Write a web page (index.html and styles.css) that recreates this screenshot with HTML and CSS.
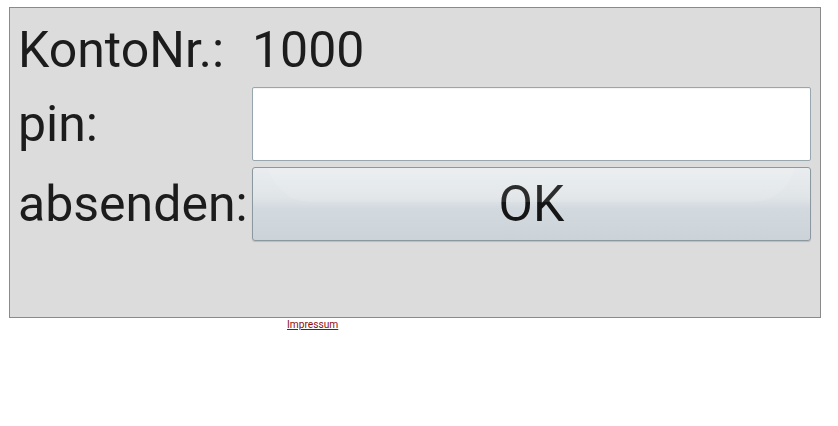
FILE: index.html
```html
<!DOCTYPE html>
<html lang="de">
<head>
<meta charset="utf-8">
<title>Login</title>
<link rel="stylesheet" href="styles.css">
</head>
<body>
<div class="panel">
  <form class="form">
    <div class="label">KontoNr.:</div>
    <div class="value">1000</div>
    <div class="label">pin:</div>
    <div class="field"><input class="pin" type="password"></div>
    <div class="label">absenden:</div>
    <div class="field"><button class="ok" type="button">OK</button></div>
  </form>
</div>
<div class="footer"><a class="impressum" href="#">Impressum</a></div>
</body>
</html>
```

FILE: styles.css
```css
html, body {
  margin: 0;
  padding: 0;
  background: #ffffff;
}
body {
  font-family: Roboto, "Liberation Sans", sans-serif;
  color: #1c1c1c;
}
.panel {
  margin: 7px 0 0 9px;
  width: 810px;
  height: 309px;
  border: 1px solid #8a8a8a;
  background: #dcdcdc;
  box-sizing: content-box;
}
.form {
  display: grid;
  grid-template-columns: 234px 559px;
  grid-template-rows: 61px 74px 74px;
  row-gap: 6px;
  column-gap: 0;
  padding: 12px 0 0 8px;
  margin: 0;
}
.label, .value {
  font-size: 50px;
  line-height: 61px;
  align-self: center;
  white-space: nowrap;
}
.field {
  display: flex;
}
.pin {
  flex: 1;
  margin: 0;
  height: 74px;
  box-sizing: border-box;
  border: 1px solid #98a7ae;
  border-radius: 2px;
  background: #ffffff;
  box-shadow: inset 0 1px 1px rgba(0,0,0,0.05);
  outline: none;
}
.ok {
  position: relative;
  overflow: hidden;
  flex: 1;
  margin: 0;
  height: 74px;
  box-sizing: border-box;
  border: 1px solid #8c989f;
  border-radius: 3px;
  background: linear-gradient(#e9edef 0%, #e0e5e8 40%, #d3dadf 56%, #cbd3d9 100%);
  box-shadow: 0 1px 1px rgba(0,0,0,0.15);
  font-family: Roboto, "Liberation Sans", sans-serif;
  font-size: 50px;
  color: #151515;
  padding: 0;
}
.ok::before {
  content: "";
  position: absolute;
  left: 14px;
  right: 14px;
  top: -30px;
  height: 64px;
  border-radius: 0 0 44px 44px;
  background: rgba(255,255,255,0.10);
}
.footer {
  padding-left: 287px;
  font-size: 10.2px;
  line-height: 13px;
}
.impressum {
  color: #8b0f0f;
  text-decoration: underline;
}
```
